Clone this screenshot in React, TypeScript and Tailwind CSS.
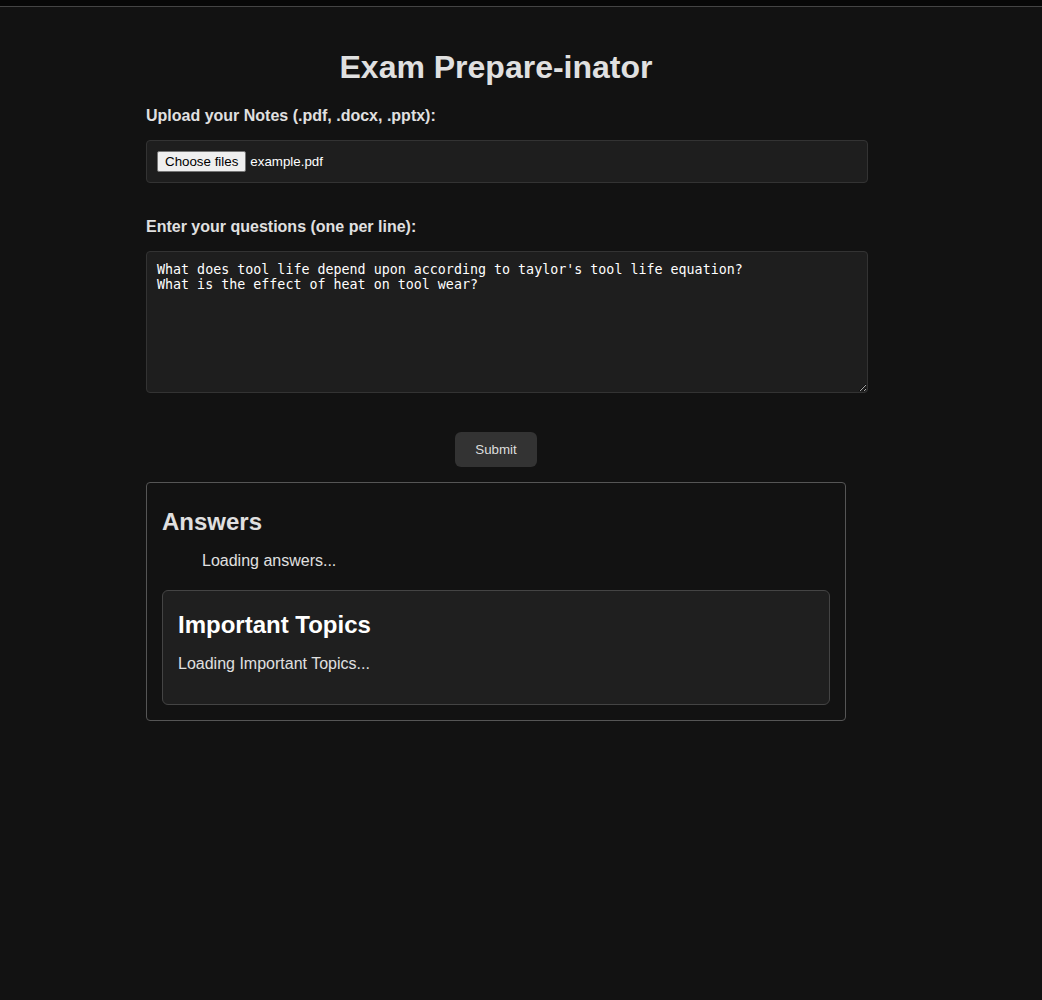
export default function App() {
    return (
        <div className="min-h-screen bg-[#121212] font-['Liberation_Sans',Arial,sans-serif] text-[#e0e0e0]">
            <div className="h-[6px] border-b border-[#444] bg-[#070707] box-content" />
            <div className="w-[700px] ml-[146px] pb-10">
                <h1 className="mt-[42px] text-center text-[32px] leading-[37px] font-bold text-[#e0e0e0]">Exam Prepare-inator</h1>
                <label className="mt-[21px] block text-base leading-[18px] font-bold">Upload your Notes (.pdf, .docx, .pptx):</label>
                <div className="mt-[15px] flex h-[43px] w-[722px] items-center rounded border border-[#333] bg-[#1e1e1e] px-[10px]">
                    <span className="flex h-[21px] items-center rounded-[2px] border border-[#767676] bg-[#efefef] px-[7px] text-[13.333px] text-black">Choose files</span>
                    <span className="ml-[4px] text-[13.333px] text-white">example.pdf</span>
                </div>
                <label className="mt-[35px] block text-base leading-[18px] font-bold">Enter your questions (one per line):</label>
                <textarea
                    className="mt-[15px] block h-[142px] w-[722px] resize-y rounded border border-[#333] bg-[#1e1e1e] px-[10px] py-[10px] font-['DejaVu_Sans_Mono',monospace] text-[13.333px] leading-[15px] text-white outline-none"
                    defaultValue={"What does tool life depend upon according to taylor's tool life equation?\nWhat is the effect of heat on tool wear?"}
                />
                <div className="mt-[39px] flex justify-center">
                    <button className="h-[35px] w-[82px] rounded-md bg-[#333] text-[13.333px] text-[#ddd]">Submit</button>
                </div>
                <div className="mt-[15px] rounded border border-[#555] px-[15px] pb-[15px]">
                    <h2 className="mt-[25px] text-2xl leading-[28px] font-bold">Answers</h2>
                    <ul className="mt-[16px] pl-[40px] text-base leading-[18px]">
                        <li>Loading answers...</li>
                    </ul>
                    <div className="mt-[20px] rounded-md border border-[#444] bg-[#1f1f1f] px-[15px] pb-[31px]">
                        <h2 className="mt-[20px] text-2xl leading-[28px] font-bold text-white">Important Topics</h2>
                        <p className="mt-[16px] text-base leading-[18px]">Loading Important Topics...</p>
                    </div>
                </div>
            </div>
        </div>
    )
}
